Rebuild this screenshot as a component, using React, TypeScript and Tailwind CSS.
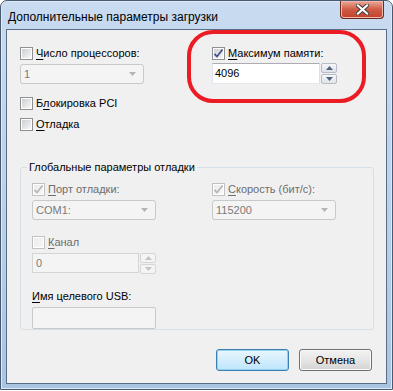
import React from 'react';

type CheckState = { checked?: boolean; disabled?: boolean };

const CheckBox = ({ checked, disabled }: CheckState) => (
  <svg width="13" height="13" viewBox="0 0 13 13" className="shrink-0">
    <defs>
      <linearGradient id={disabled ? 'cbd' : 'cbe'} x1="0" y1="0" x2="1" y2="1">
        <stop offset="0" stopColor={disabled ? '#ececec' : '#cbcfd5'} />
        <stop offset="1" stopColor="#f7f7f7" />
      </linearGradient>
    </defs>
    <rect x="0.5" y="0.5" width="12" height="12" fill="#fff" stroke={disabled ? '#c2c2c2' : '#8e8f8f'} />
    <rect x="2" y="2" width="9" height="9" fill={`url(#${disabled ? 'cbd' : 'cbe'})`} />
    {checked && (
      <path
        d="M2.5 6.8 L5 9.5 L10.5 2.5"
        fill="none"
        stroke={disabled ? '#b5b5b5' : '#3f4f86'}
        strokeWidth="1.7"
      />
    )}
  </svg>
);

const Check = ({
  checked,
  disabled,
  mnemonic,
  rest,
  pre = '',
}: CheckState & { mnemonic: string; rest: string; pre?: string }) => (
  <label className="flex h-[14px] items-center gap-[3px]">
    <CheckBox checked={checked} disabled={disabled} />
    <span className={disabled ? 'text-[#6d6d6d]' : 'text-black'}>
      {pre}
      <span className="underline decoration-1 underline-offset-2">{mnemonic}</span>
      {rest}
    </span>
  </label>
);

const Combo = ({ value, width }: { value: string; width: string }) => (
  <div
    className={`${width} flex h-[20px] items-center justify-between rounded-[3px] border border-[#c9c9c9] bg-[#f4f4f4] pl-[3px] pr-[7px] text-[#7a7a7a]`}
  >
    <span>{value}</span>
    <svg width="7" height="4" viewBox="0 0 7 4">
      <path d="M0 0 H7 L3.5 4 Z" fill="#b4b4b4" />
    </svg>
  </div>
);

const Arrow = ({ up, color }: { up?: boolean; color: string }) => (
  <svg width="7" height="4" viewBox="0 0 7 4">
    <path d={up ? 'M0 4 H7 L3.5 0 Z' : 'M0 0 H7 L3.5 4 Z'} fill={color} />
  </svg>
);

const Spinner = ({ disabled }: { disabled?: boolean }) => {
  const btn = disabled
    ? 'border-[#d5d5d5] bg-[#f4f4f4]'
    : 'border-[#b7bcc4] bg-gradient-to-b from-[#f6f7f9] to-[#dfe2e7]';
  const color = disabled ? '#c4c4c4' : '#4d6185';
  return (
    <div className="ml-[1px] flex w-[16px] flex-col gap-[1px]">
      <div className={`flex h-[10px] items-center justify-center rounded-[2px] border ${btn}`}>
        <Arrow up color={color} />
      </div>
      <div className={`flex h-[10px] items-center justify-center rounded-[2px] border ${btn}`}>
        <Arrow color={color} />
      </div>
    </div>
  );
};

const Button = ({ children, primary }: { children: React.ReactNode; primary?: boolean }) => (
  <button
    className={`h-[22px] w-[73px] rounded-[3px] border text-black ${
      primary
        ? 'border-[#3c7fb1] bg-gradient-to-b from-[#eaf6fd] to-[#bee6fd] shadow-[inset_0_0_0_1px_#98d1ef]'
        : 'border-[#707070] bg-gradient-to-b from-[#f2f2f2] via-[#e6e6e6] to-[#d3d3d3] shadow-[inset_0_0_0_1px_#fbfbfb]'
    }`}
  >
    {children}
  </button>
);

export default function App() {
  return (
    <div className="h-[391px] w-[393px] bg-white font-['Liberation_Sans',sans-serif] text-[11px] leading-none">
      <div className="relative flex h-[390px] w-[393px] flex-col rounded-t-[7px] border border-[#4a5a70] bg-gradient-to-b from-[#c8dbf0] via-[#bcd2eb] to-[#a9c3e3] shadow-[inset_0_0_0_1px_#dde9f6]">
        {/* title bar */}
        <div className="flex h-[28px] shrink-0 items-start justify-between pl-[7px]">
          <span className="mt-[10px] text-[12px] text-black">Дополнительные параметры загрузки</span>
          <div className="mr-[8px] flex h-[18px] w-[44px] items-center justify-center rounded-b-[4px] border border-t-0 border-[#6b2a22] bg-gradient-to-b from-[#e9a99a] via-[#cf5a45] to-[#c2412a] shadow-[inset_0_0_0_1px_#f0b8a8]">
            <svg width="13" height="11" viewBox="0 0 13 11">
              <path d="M2 1.5 L11 9.5 M11 1.5 L2 9.5" stroke="#3b3b3b" strokeWidth="4" strokeLinecap="square" />
              <path d="M2 1.5 L11 9.5 M11 1.5 L2 9.5" stroke="#ffffff" strokeWidth="2.2" strokeLinecap="square" />
            </svg>
          </div>
        </div>

        {/* client area */}
        <div className="ml-[5px] mr-[5px] flex h-[355px] flex-col border border-[#5a6d86] bg-[#f0f0f0] pl-[13px] pr-[13px] pt-[16px]">
          <div className="grid grid-cols-[192px_1fr]">
            <div className="flex flex-col">
              <Check mnemonic="Ч" rest="исло процессоров:" />
              <div className="mt-[4px]">
                <Combo value="1" width="w-[124px]" />
              </div>
              <div className="mt-[12px]">
                <Check pre="Б" mnemonic="л" rest="окировка PCI" />
              </div>
              <div className="mt-[7px]">
                <Check mnemonic="О" rest="тладка" />
              </div>
            </div>
            <div className="flex flex-col">
              <Check checked mnemonic="М" rest="аксимум памяти:" />
              <div className="mt-[3px] flex">
                <div className="flex h-[21px] w-[108px] items-center border border-[#abadb3] border-b-[#e3e9ef] border-l-[#e2e3ea] border-r-[#dbdfe6] bg-white pl-[2px] text-black">
                  4096
                </div>
                <Spinner />
              </div>
            </div>
          </div>

          {/* group box */}
          <fieldset className="mt-[31px] h-[168px] w-[354px] rounded-[3px] border border-[#d5dfe5] pl-[11px]">
            <legend className="-ml-[5px] px-[2px] text-black">Глобальные параметры отладки</legend>
            <div className="mt-[9px] grid grid-cols-[180px_1fr]">
              <div className="flex flex-col">
                <Check checked disabled mnemonic="П" rest="орт отладки:" />
                <div className="mt-[4px]">
                  <Combo value="COM1:" width="w-[124px]" />
                </div>
                <div className="mt-[15px]">
                  <Check disabled mnemonic="К" rest="анал" />
                </div>
                <div className="mt-[4px] flex">
                  <div className="flex h-[20px] w-[107px] items-center border border-[#d5d5d5] bg-[#f4f4f4] pl-[3px] text-[#7a7a7a]">
                    0
                  </div>
                  <Spinner disabled />
                </div>
                <div className="mt-[17px] h-[14px] text-black">
                  <span className="underline decoration-1 underline-offset-2">И</span>мя целевого USB:
                </div>
                <div className="mt-[2px] h-[22px] w-[124px] rounded-[2px] border border-[#c9c9c9] bg-[#f4f4f4]" />
              </div>
              <div className="flex flex-col">
                <Check checked disabled mnemonic="С" rest="корость (бит/с):" />
                <div className="mt-[4px]">
                  <Combo value="115200" width="w-[124px]" />
                </div>
              </div>
            </div>
          </fieldset>

          <div className="mt-[19px] flex justify-end gap-[10px] pr-[1px]">
            <Button primary>OK</Button>
            <Button>Отмена</Button>
          </div>
        </div>

        {/* annotation */}
        <div className="absolute left-[186px] top-[29px] h-[73px] w-[179px] rounded-[26px] border-[4px] border-[#ec1c24]" />
      </div>
    </div>
  );
}
